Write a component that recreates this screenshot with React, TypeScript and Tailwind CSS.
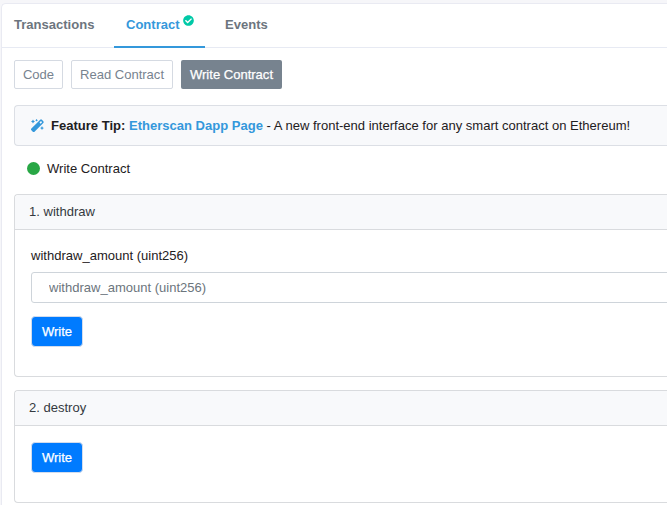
import type { ReactNode } from "react";
import { FaCheckCircle } from "react-icons/fa";

function MagicWand() {
  return (
    <svg viewBox="0 0 13 13" className="mr-[7px] size-[13px] text-[#3498db]" fill="currentColor">
      <path
        fillRule="evenodd"
        d="M.4 9.6 9.2.8a1.2 1.2 0 0 1 1.7 0l1.4 1.4a1.2 1.2 0 0 1 0 1.7l-8.8 8.8a1.2 1.2 0 0 1-1.7 0L.4 11.3a1.2 1.2 0 0 1 0-1.7ZM8.5 3.6l1.1 1.1 1.5-1.5L10 2.1Z"
      />
      <path d="m2 .5.7 1.3 1.3.7-1.3.7L2 4.5l-.7-1.3L0 2.5l1.3-.7ZM5.6-.2l.5.9.9.5-.9.5-.5.9-.5-.9-.9-.5.9-.5ZM11 7.1l.7 1.3 1.3.7-1.3.7-.7 1.3-.7-1.3-1.3-.7 1.3-.7Z" />
    </svg>
  );
}

function Panel({ title, className, children }: { title: string; className: string; children: ReactNode }) {
  return (
    <section className={`flex flex-col rounded-l border border-r-0 border-[#d9dbde] ${className}`}>
      <h2 className="h-[35px] shrink-0 rounded-tl border-b border-[#d9dbde] bg-[#f8f9fb] pl-[14px] leading-[34px] text-[#343a40]">
        {title}
      </h2>
      <div className="flex flex-col items-start pl-4">{children}</div>
    </section>
  );
}

function WriteButton({ className }: { className: string }) {
  return (
    <button className={`h-[31px] w-[52px] rounded-[4px] border border-[#d3dcec] bg-[#007bff] text-white ${className}`}>
      <span className="[-webkit-text-stroke:0.25px_white]">Write</span>
    </button>
  );
}

export default function App() {
  return (
    <div className="h-[505px] w-[667px] overflow-hidden bg-[#f6f6f9] pl-px pt-[3px] font-['Liberation_Sans',Arial,sans-serif] text-[13.04px] text-[#1e2022]">
      <main className="h-[510px] rounded-tl-[5px] border border-r-0 border-[#e9eaf2] bg-white">
        <nav className="flex h-11 border-b border-[#e7eaf3] pl-3 font-bold leading-[42px] text-[#6c757e]">
          <a className="w-[100px]">Transactions</a>
          <a className="flex h-11 w-[91px] border-b-2 border-[#3498db] pl-[12px] text-[#3498db]">
            Contract
            <FaCheckCircle className="ml-[3px] mt-[11px] size-[11px] text-[#00c9a7]" />
          </a>
          <a className="pl-5">Events</a>
        </nav>
        <div className="pl-3">
          <div className="mt-3 flex h-[29px] gap-2 text-[#77838f]">
            <button className="w-[49px] rounded-[2px] border border-[#d5dae2]">Code</button>
            <button className="w-[102px] rounded-[2px] border border-[#d5dae2]">Read Contract</button>
            <button className="w-[101px] rounded-[2px] bg-[#77838f] text-white [-webkit-text-stroke:0.25px_white]">
              Write Contract
            </button>
          </div>
          <div className="mt-4 flex h-[41px] items-center rounded-l border border-r-0 border-[#dcdfe5] bg-[#f8f9fb] pl-4 whitespace-pre">
            <MagicWand />
            <b>Feature Tip: </b>
            <b className="text-[#3498db]">Etherscan Dapp Page</b>
            <span> - A new front-end interface for any smart contract on Ethereum!</span>
          </div>
          <div className="flex h-12 items-center pb-[3px] pl-[13px]">
            <i className="mr-[7px] size-[13px] rounded-full bg-[#28a745]" />
            Write Contract
          </div>
          <Panel title="1. withdraw" className="h-[183px]">
            <label className="mt-4 leading-5">withdraw_amount (uint256)</label>
            <input
              className="mt-[6px] h-[31px] w-[640px] rounded-[3px] border border-[#ced4da] pl-[17px] placeholder:text-[#6c757d]"
              placeholder="withdraw_amount (uint256)"
            />
            <WriteButton className="mt-[13px]" />
          </Panel>
          <Panel title="2. destroy" className="mt-[13px] h-[113px]">
            <WriteButton className="mt-4" />
          </Panel>
        </div>
      </main>
    </div>
  );
}
